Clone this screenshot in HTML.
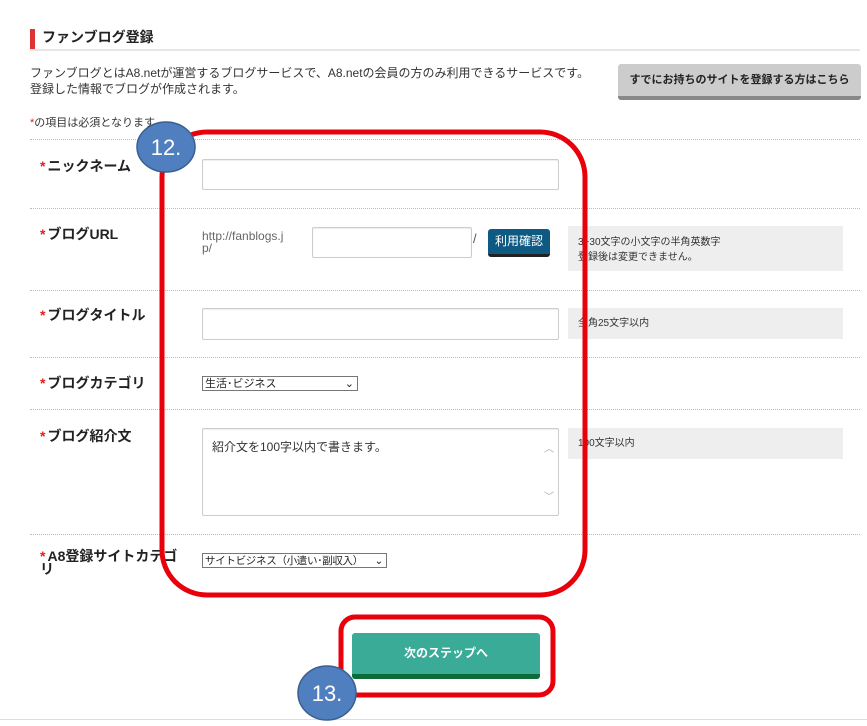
<!DOCTYPE html>
<html><head><meta charset="utf-8"><style>
body{margin:0;width:867px;height:725px;background:#fff;position:relative;overflow:hidden;font-family:"Liberation Sans","Noto Sans CJK JP",sans-serif;color:#333}
.a{position:absolute}
.dl{position:absolute;left:30px;width:830px;border-top:1px dotted #bbb;height:0}
.lab{position:absolute;left:40px;font-size:14px;font-weight:bold;color:#222}
.lab b{color:#d22;margin-right:2px}
.in{position:absolute;border:1px solid #ccc;border-radius:2px;background:#fff;box-shadow:inset 0 1px 1px #eee}
.hint{position:absolute;left:568px;width:275px;background:#eee;font-size:10px;color:#333;padding:0 0 0 10px;box-sizing:border-box}
.sel{position:absolute;border:1px solid #777;background:#fff;font-size:11px;height:15px;line-height:14px;padding-left:2px;box-sizing:border-box;color:#222;white-space:nowrap;overflow:hidden}
.sel i{position:absolute;right:3px;top:0;font-style:normal}
</style></head><body>
<div class="a" style="left:30px;top:29px;width:5px;height:20px;background:#d33"></div>
<div class="a" style="left:42px;top:27px;font-size:14px;font-weight:bold;color:#222">ファンブログ登録</div>
<div class="a" style="left:30px;top:49px;width:830px;height:2px;background:#e6e6e6"></div>
<div class="a" style="left:30px;top:65px;font-size:12px;line-height:16px;color:#333">ファンブログとはA8.netが運営するブログサービスで、A8.netの会員の方のみ利用できるサービスです。<br>登録した情報でブログが作成されます。</div>
<div class="a" style="left:618px;top:64px;width:243px;height:32px;background:#ccc;border-bottom:4px solid #888;border-radius:3px;font-size:11px;font-weight:bold;color:#222;text-align:center;line-height:32px">すでにお持ちのサイトを登録する方はこちら</div>
<div class="a" style="left:30px;top:114px;font-size:11px;color:#333"><span style="color:#d22">*</span>の項目は必須となります</div>
<div class="dl" style="top:139px"></div>
<div class="dl" style="top:208px"></div>
<div class="dl" style="top:290px"></div>
<div class="dl" style="top:357px"></div>
<div class="dl" style="top:409px"></div>
<div class="dl" style="top:534px"></div>
<div class="lab" style="top:156px"><b>*</b>ニックネーム</div>
<div class="lab" style="top:224px"><b>*</b>ブログURL</div>
<div class="lab" style="top:305px"><b>*</b>ブログタイトル</div>
<div class="lab" style="top:373px"><b>*</b>ブログカテゴリ</div>
<div class="lab" style="top:426px"><b>*</b>ブログ紹介文</div>
<div class="lab" style="top:550px;line-height:13px;width:150px"><b>*</b>A8登録サイトカテゴ<br>リ</div>
<div class="in" style="left:202px;top:159px;width:355px;height:29px"></div>
<div class="a" style="left:202px;top:230px;font-size:12px;line-height:12px;color:#666;white-space:nowrap">http://fanblogs.j<br>p/</div>
<div class="in" style="left:312px;top:227px;width:158px;height:29px"></div>
<div class="a" style="left:473px;top:231px;font-size:13px;color:#555">/</div>
<div class="a" style="left:488px;top:229px;width:62px;height:25px;background:#0e5a82;border-bottom:3px solid #222;border-radius:3px;color:#fff;font-size:12px;text-align:center;line-height:25px">利用確認</div>
<div class="hint" style="top:226px;height:45px;padding-top:9px;line-height:15px">3~30文字の小文字の半角英数字<br>登録後は変更できません。</div>
<div class="in" style="left:202px;top:308px;width:355px;height:30px"></div>
<div class="hint" style="top:308px;height:31px;line-height:31px">全角25文字以内</div>
<div class="sel" style="left:202px;top:376px;width:156px">生活･ビジネス<i>⌄</i></div>
<div class="in" style="left:202px;top:428px;width:355px;height:86px"></div>
<div class="a" style="left:212px;top:438px;font-size:12px;color:#333">紹介文を100字以内で書きます。</div>
<div class="a" style="left:544px;top:440px;font-size:10px;color:#aaa">︿</div>
<div class="a" style="left:544px;top:488px;font-size:10px;color:#aaa">﹀</div>
<div class="hint" style="top:428px;height:31px;line-height:31px">100文字以内</div>
<div class="sel" style="left:202px;top:553px;width:185px;font-size:10.5px;letter-spacing:-0.3px">サイトビジネス（小遣い･副収入）<i>⌄</i></div>
<div class="a" style="left:352px;top:633px;width:188px;height:41px;background:#3aab97;border-bottom:5px solid #0d6b3a;border-radius:3px;color:#fff;font-size:12px;font-weight:bold;text-align:center;line-height:41px">次のステップへ</div>
<div class="a" style="left:0;top:719px;width:867px;border-top:1px solid #ddd;height:6px"></div>
<svg class="a" style="left:0;top:0" width="867" height="725">
<rect x="162" y="132" width="423" height="463" rx="45" fill="none" stroke="#e8000b" stroke-width="5"/>
<rect x="341" y="617" width="212" height="78" rx="14" fill="none" stroke="#e8000b" stroke-width="5"/>
<ellipse cx="166" cy="147" rx="29" ry="25" fill="#4f7fbf" stroke="#3b5f90" stroke-width="1.5"/>
<text x="166" y="155" font-size="22" fill="#fff" text-anchor="middle" font-family="Liberation Sans, sans-serif">12.</text>
<ellipse cx="327" cy="693" rx="29" ry="27" fill="#4f7fbf" stroke="#3b5f90" stroke-width="1.5"/>
<text x="327" y="701" font-size="22" fill="#fff" text-anchor="middle" font-family="Liberation Sans, sans-serif">13.</text>
</svg>
</body></html>
